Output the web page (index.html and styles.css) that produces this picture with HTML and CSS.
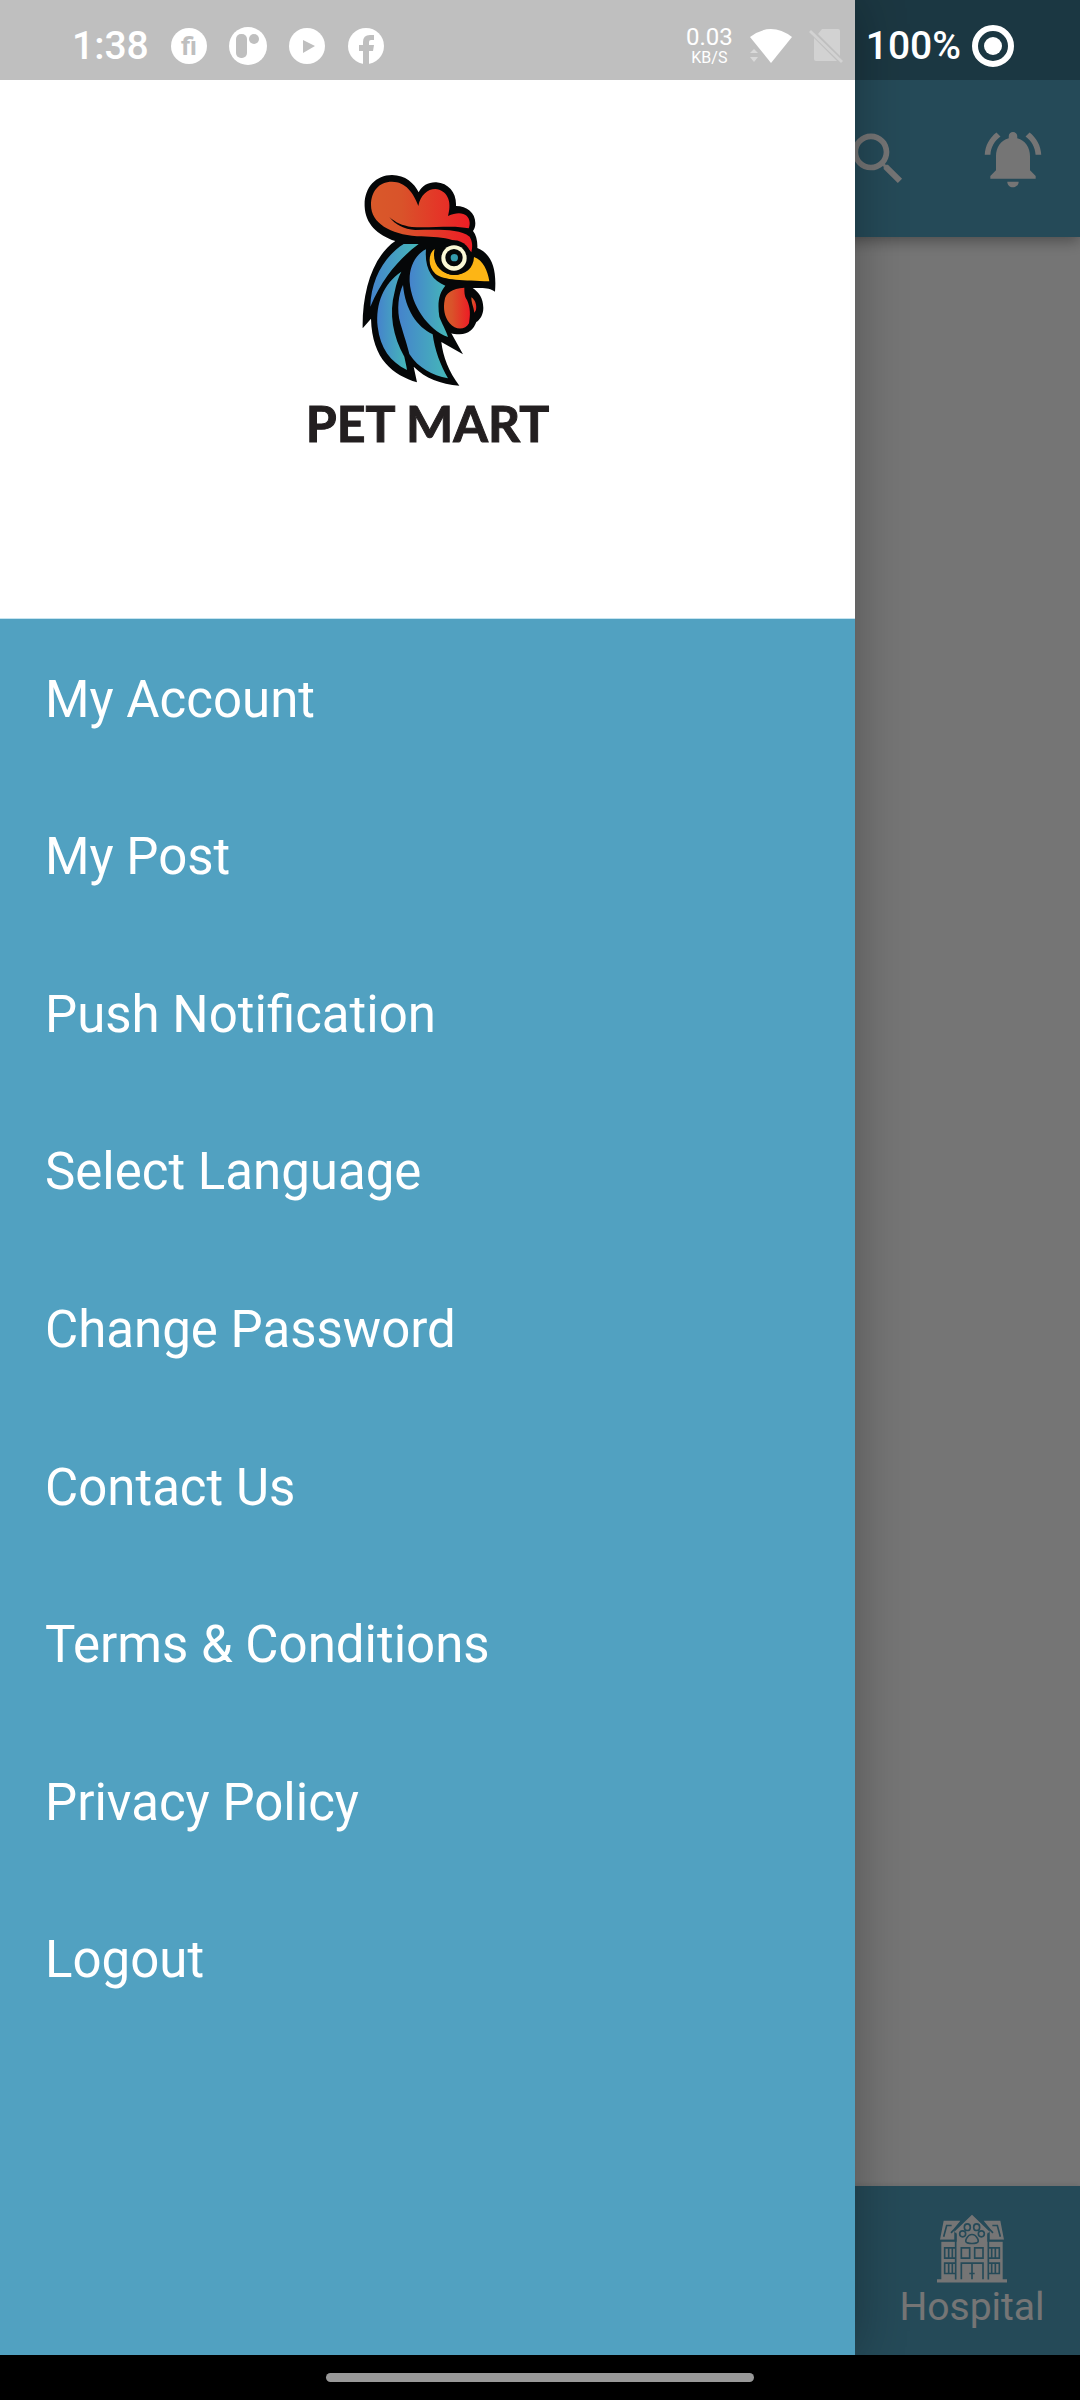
FILE: index.html
```html
<!DOCTYPE html>
<html lang="en">
<head>
<meta charset="utf-8">
<meta name="viewport" content="width=device-width, initial-scale=1">
<title>Pet Mart</title>
<link rel="stylesheet" href="styles.css">
</head>
<body>
<div class="device">
  <div class="stage">
    <div class="app">
      <header class="app-bar">
        <button class="icon-button" type="button" aria-label="Search">
          <svg class="action-icon" viewBox="0 0 24 24" aria-hidden="true"><path d="M15.5 14h-.79l-.28-.27C15.41 12.59 16 11.11 16 9.5 16 5.91 13.09 3 9.5 3S3 5.91 3 9.5 5.91 16 9.5 16c1.61 0 3.09-.59 4.23-1.57l.27.28v.79l5 4.99L20.49 19l-4.99-5zm-6 0C7.01 14 5 11.99 5 9.5S7.01 5 9.5 5 14 7.01 14 9.5 11.99 14 9.5 14z"/></svg>
        </button>
        <button class="icon-button" type="button" aria-label="Notifications">
          <svg class="action-icon" viewBox="0 0 24 24" aria-hidden="true"><path d="M7.58 4.08L6.15 2.65C3.75 4.48 2.17 7.3 2.03 10.5h2c.15-2.65 1.51-4.97 3.55-6.42zm12.39 6.42h2c-.15-3.2-1.73-6.02-4.12-7.85l-1.42 1.43c2.02 1.45 3.39 3.77 3.54 6.42zM18 11c0-3.07-1.64-5.64-4.5-6.32V4c0-.83-.67-1.5-1.5-1.5s-1.5.67-1.5 1.5v.68C7.63 5.36 6 7.92 6 11v5l-2 2v1h16v-1l-2-2v-5zm-6 11c.14 0 .27-.01.4-.04.65-.14 1.18-.58 1.44-1.18.1-.24.15-.5.15-.78h-4c.01 1.1.9 2 2.01 2z"/></svg>
        </button>
      </header>
      <main class="app-content"></main>
      <nav class="tab-bar" aria-label="Sections">
        <a class="tab" href="#hospital">
          <svg class="tab-icon" viewBox="0 0 210 206" aria-hidden="true">
            <g fill="#fff">
              <path d="M20 20H70L52 42V77H9Z M190 20H140L158 42V77H201Z"/>
              <path d="M13 83H197V197H13Z M0 195H210V205H0Z"/>
              <path d="M105 2L158 53L151 60V197H59V60L52 53Z"/>
            </g>
            <g fill="none" stroke="#51a1c1" stroke-width="5">
              <path d="M20 68L29 34H44M190 68L181 34H166M42 56L75 22M168 56L135 22M56 56V196M154 56V196M9 79H54M156 79H201"/>
              <ellipse cx="91" cy="39" rx="9" ry="10"/><ellipse cx="119" cy="39" rx="9" ry="10"/>
              <circle cx="77" cy="59" r="9"/><circle cx="133" cy="59" r="9"/>
              <path d="M105 61C92 61 79 84 91 86C98 88 112 88 119 86C131 84 118 61 105 61Z"/>
              <path d="M73 101H98V132H73ZM113 101H138V132H113Z"/>
              <path d="M54 101H23V132H54M156 101H187V132H156M54 147H23V178H54M156 147H187V178H156"/>
              <path d="M35 101V132M46 101V132M164 101V132M175 101V132M35 147V178M46 147V178M164 147V178M175 147V178"/>
              <path d="M73 195V147H138V195M105 147V195M97 178H113"/>
            </g>
          </svg>
          <span class="tab-label">Hospital</span>
        </a>
      </nav>
    </div>

    <div class="scrim"></div>

    <aside class="drawer" aria-label="Menu">
      <header class="drawer-header">
        <svg class="logo" viewBox="8 0 510 720" role="img" aria-label="Rooster">
          <defs>
            <linearGradient id="comb"><stop offset="0" stop-color="#d9592a"/><stop offset=".3" stop-color="#d9532a"/><stop offset="1" stop-color="#ee1c25"/></linearGradient>
            <linearGradient id="feather"><stop offset="0" stop-color="#4583cc"/><stop offset="1" stop-color="#45b8b8"/></linearGradient>
          </defs>
          <path fill="#050708" d="M73 140C70 85 105 45 155 45C195 45 222 70 235 97C245 76 265 66 288 67C325 70 349 98 347 138C380 138 405 158 405 190C405 201 402 208 398 213C408 225 412 245 411 264C450 280 470 320 464 395C452 387 440 384 420 384L397 384C417 398 428 415 429 443C429 465 418 480 408 486C400 508 385 522 358 523C345 523 338 522 333 520L368 583L303 546C308 590 325 635 357 677C300 672 255 655 220 620L230 667C160 645 95 600 92 476L67 505C65 400 95 290 165 243C110 225 75 190 73 140Z"/>
          <path fill="url(#comb)" d="M92 135C92 95 115 65 155 65C195 65 220 98 234 138C240 105 262 87 285 87C318 90 337 120 323 168C360 150 387 162 388 188C388 195 387 200 385 205C370 202 350 200 330 200C290 200 250 204 215 201C185 197 165 187 147 171C165 194 190 208 225 210C290 210 355 205 388 230C397 245 397 262 393 277C360 235 300 230 230 229C150 222 92 190 92 135Z"/>
          <path fill="url(#feather)" d="M190 252H235C185 290 130 345 90 440C92 360 130 290 190 252Z"/>
          <path fill="url(#feather)" d="M183 335C130 370 105 430 112 500C120 565 150 605 200 630C198 615 195 605 192 590C158 530 145 460 163 395C168 370 175 350 183 335Z"/>
          <path fill="url(#feather)" d="M188 375C175 400 168 450 180 490C192 530 202 560 207 582C235 625 275 645 323 655C300 615 283 570 277 523C230 500 195 450 188 375Z"/>
          <path fill="url(#feather)" d="M257 268C222 285 206 325 208 365C213 435 262 508 323 531C318 512 304 490 297 470C291 430 295 400 315 377C275 362 252 325 257 268Z"/>
          <path fill="#fdb515" d="M283 267C263 280 262 320 285 341C310 362 370 360 447 364C442 332 428 300 401 291C400 325 375 345 340 345C300 343 273 310 283 267Z"/>
          <circle cx="341" cy="293" r="52" fill="#050708"/>
          <circle cx="341" cy="294" r="38" fill="#fbf9d6"/>
          <circle cx="341" cy="293" r="26" fill="#050708"/>
          <circle cx="342" cy="293" r="11" fill="#349bad"/>
          <path fill="url(#comb)" d="M313 420C315 400 335 385 372 383C372 400 373 410 380 420C391 445 390 465 386 490C375 511 345 511 328 490C312 470 308 445 313 420Z"/>
          <path fill="url(#comb)" d="M393 412C405 420 410 435 407 450L402 458C400 440 393 430 393 412Z"/>
        </svg>
        <p class="brand">PET MART</p>
      </header>
      <nav>
        <ul class="menu">
          <li><a href="#account">My Account</a></li>
          <li><a href="#posts">My Post</a></li>
          <li><a href="#push">Push Notification</a></li>
          <li><a href="#language">Select Language</a></li>
          <li><a href="#password">Change Password</a></li>
          <li><a href="#contact">Contact Us</a></li>
          <li><a href="#terms">Terms &amp; Conditions</a></li>
          <li><a href="#privacy">Privacy Policy</a></li>
          <li><a href="#logout">Logout</a></li>
        </ul>
      </nav>
    </aside>

    <div class="status-bar">
      <div class="status-left">
        <span class="clock">1:38</span>
        <div class="notices">
          <svg viewBox="0 0 38 38" aria-hidden="true"><circle cx="19" cy="19" r="18" fill="#fff"/><text x="19" y="28" text-anchor="middle" class="fi-mark">fi</text></svg>
          <svg viewBox="0 0 38 38" aria-hidden="true"><circle cx="19" cy="19" r="19" fill="#fff"/><rect x="7" y="7" width="11" height="24" rx="5" fill="#bfbfbf"/><circle cx="25" cy="12" r="5" fill="#bfbfbf"/></svg>
          <svg viewBox="0 0 38 38" aria-hidden="true"><circle cx="19" cy="19" r="18" fill="#fff"/><path d="M15 13L27 19L15 26Z" fill="#bfbfbf"/></svg>
          <svg viewBox="0 0 38 38" aria-hidden="true"><circle cx="19" cy="19" r="18" fill="#fff"/><path d="M16 38V24H12V18H16V15Q16 8 23 8H27V13H24Q22 13 22 15V18H27L26 24H22V38Z" fill="#bfbfbf"/></svg>
        </div>
      </div>
      <div class="status-right">
        <div class="speed"><span class="speed-value">0.03</span><span class="speed-unit">KB/S</span></div>
        <svg class="wifi" viewBox="0 0 42 36" aria-hidden="true"><path d="M4 21L8 25H0ZM4 34L8 29H0Z" fill="#d9d9d9"/><path d="M0 9Q21 -7 42 9L21 35Z" fill="#fff"/></svg>
        <svg class="sim" viewBox="0 0 34 34" aria-hidden="true"><g fill="#d2d2d2"><path d="M13 0H29Q31 0 31 2V27L9 5ZM5 9L28 32H7Q5 32 5 30Z"/><path d="M0 3L2 1L34 32L32 34Z"/></g></svg>
        <span class="battery-level">100%</span>
        <svg class="battery" viewBox="0 0 42 42" aria-hidden="true"><circle cx="21" cy="21" r="18" fill="none" stroke="#fff" stroke-width="6"/><circle cx="21" cy="21" r="9" fill="#fff"/></svg>
      </div>
    </div>
  </div>
  <div class="gesture-bar"><span class="gesture-pill"></span></div>
</div>
</body>
</html>
```
FILE: styles.css
```css
* {
  box-sizing: border-box;
}

body {
  margin: 0;
  font-family: Roboto, "Noto Sans", sans-serif;
  color: #fff;
}

svg {
  display: block;
}

a {
  color: inherit;
  text-decoration: none;
}

.device {
  display: flex;
  flex-direction: column;
  min-height: 100vh;
}

.stage {
  position: relative;
  flex: 1;
  display: flex;
  overflow: hidden;
}

/* Page behind the drawer */
.app {
  flex: 1;
  display: flex;
  flex-direction: column;
  background: #fff;
}

.app-bar {
  position: relative;
  display: flex;
  justify-content: flex-end;
  padding-top: 80px;
  background: #51a1c1;
  box-shadow: 0 4px 14px rgba(0, 0, 0, 0.35);
}

.icon-button {
  display: flex;
  align-items: center;
  justify-content: center;
  width: 135px;
  height: 157px;
  padding: 0;
  border: 0;
  background: none;
}

.action-icon {
  width: 68px;
  height: 68px;
  fill: #fff;
}

.app-content {
  flex: 1;
}

.tab-bar {
  display: flex;
  justify-content: flex-end;
  background: #51a1c1;
  box-shadow: 0 -1px 6px rgba(0, 0, 0, 0.1);
}

.tab {
  display: flex;
  flex-direction: column;
  align-items: center;
  width: 20%;
  padding: 28px 0 24px;
}

.tab-icon {
  width: 70px;
  height: 69px;
}

.tab-label {
  font-size: 39px;
  line-height: 48px;
}

/* Drawer */
.scrim {
  position: absolute;
  inset: 0;
  background: rgba(0, 0, 0, 0.54);
}

.drawer {
  position: absolute;
  inset: 0 auto 0 0;
  width: 855px;
  max-width: 80%;
  background: #51a1c1;
  box-shadow: 0 0 48px rgba(0, 0, 0, 0.3);
}

.drawer-header {
  display: flex;
  flex-direction: column;
  align-items: center;
  padding: 160px 0 172px;
  background: #fff;
  border-bottom: 1px solid #c5e4f0;
}

.logo {
  width: 170px;
  height: 240px;
}

.brand {
  margin: 0;
  font-family: Lato, sans-serif;
  font-size: 50px;
  font-weight: 700;
  line-height: 46px;
  color: #231f20;
  -webkit-text-stroke: 1px #231f20;
}

.menu {
  display: grid;
  grid-auto-rows: 1fr;
  min-height: 1420px;
  margin: 0;
  padding: 2px 0 0;
  list-style: none;
}

.menu a {
  display: flex;
  align-items: center;
  height: 100%;
  padding: 0 45px;
  font-size: 51px;
  line-height: 60px;
}

/* System bars */
.status-bar {
  position: absolute;
  inset: 0 0 auto;
  display: flex;
  justify-content: space-between;
  height: 80px;
  padding: 12px 66px 0 72px;
  background: rgba(0, 0, 0, 0.25);
}

.status-left,
.status-right,
.notices {
  display: flex;
  align-items: center;
}

.status-left {
  gap: 21px;
}

.notices {
  gap: 21px;
}

.notices svg {
  width: 38px;
  height: 38px;
}

.fi-mark {
  font-size: 26px;
  font-weight: 700;
  fill: #bfbfbf;
}

.clock,
.battery-level {
  font-size: 39px;
  font-weight: 500;
  line-height: 48px;
}

.speed {
  display: flex;
  flex-direction: column;
  align-items: center;
}

.speed-value {
  font-size: 24px;
  line-height: 23px;
}

.speed-unit {
  font-size: 16px;
  line-height: 18px;
}

.wifi {
  width: 42px;
  height: 36px;
  margin-left: 17px;
}

.sim {
  width: 34px;
  height: 34px;
  margin: 0 23px 0 17px;
}

.battery {
  width: 42px;
  height: 42px;
  margin-left: 11px;
}

.gesture-bar {
  display: flex;
  align-items: center;
  justify-content: center;
  height: 45px;
  background: #000;
}

.gesture-pill {
  width: 428px;
  max-width: 40%;
  height: 9px;
  border-radius: 5px;
  background: #999;
}
```
